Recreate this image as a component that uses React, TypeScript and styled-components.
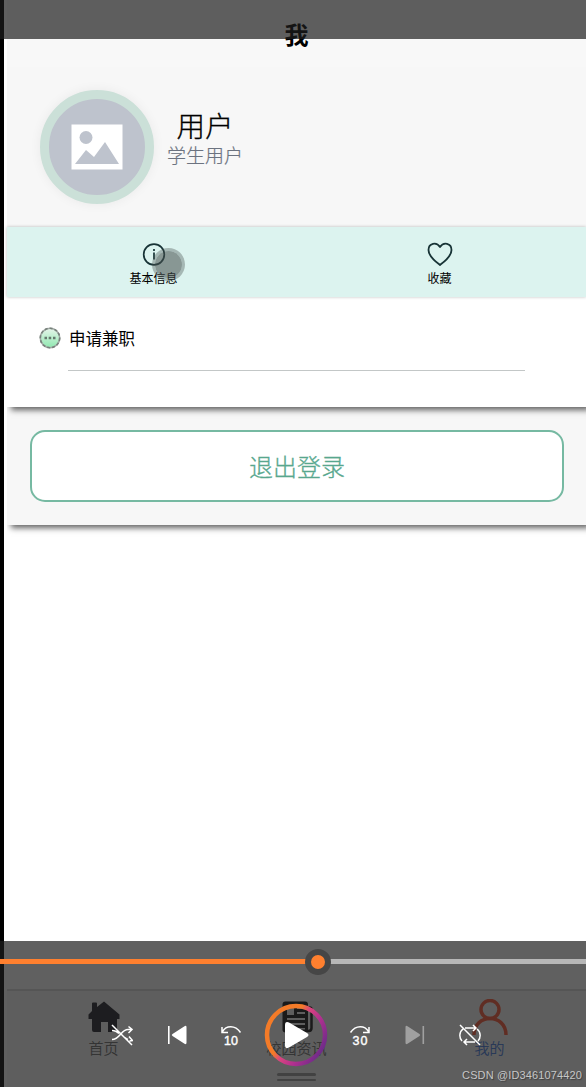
import React from "react";
import styled, { createGlobalStyle } from "styled-components";

const GlobalStyle = createGlobalStyle`
  * { box-sizing: border-box; }
  html, body { margin: 0; padding: 0; background: #fff; }
  body { font-family: "Noto Sans CJK SC", sans-serif; font-weight: 300; overflow: hidden; }
`;

const Screen = styled.div`
  position: relative;
  width: 586px;
  height: 1087px;
  padding-left: 7px;
  background: linear-gradient(90deg, #000 4px, #fff 4px);
  overflow: hidden;
`;

const Page = styled.main`
  display: flex;
  flex-direction: column;
  height: 100%;
`;

const Header = styled.header`
  height: 67px;
  flex: none;
  background: #f8f8f8;
  color: #000;
  font-size: 24px;
  font-weight: 700;
  line-height: 68px;
  text-align: center;
`;

const Profile = styled.section`
  display: flex;
  flex: none;
  height: 160px;
  padding: 23px 0 0 32.5px;
  background: #f7f7f7;
`;

const Avatar = styled.div`
  display: flex;
  flex: none;
  align-items: center;
  justify-content: center;
  width: 114px;
  height: 114px;
  border: 9px solid #cbe0d8;
  border-radius: 50%;
  background: #bec3cd;
  box-shadow: 0 0 12px rgba(0, 0, 0, 0.06);
`;

const Identity = styled.div`
  display: flex;
  flex-direction: column;
  align-items: center;
  width: 76px;
  margin: 17px 0 0 13.5px;
`;

const UserName = styled.div`
  color: #000;
  font-size: 28.5px;
  line-height: 35px;
  -webkit-text-stroke: 0.3px;
`;

const UserRole = styled.div`
  color: #6c7380;
  font-size: 19px;
  line-height: 26px;
  white-space: nowrap;
  -webkit-text-stroke: 0.2px;
`;

const Shortcuts = styled.nav`
  display: flex;
  position: relative;
  z-index: 2;
  flex: none;
  height: 70px;
  background: #dcf3ef;
  box-shadow: 0 0 3px rgba(0, 0, 0, 0.25);
`;

const Shortcut = styled.div<{ $width: number }>`
  display: flex;
  flex-direction: column;
  align-items: center;
  width: ${(p) => p.$width}px;
  padding-top: 14px;
  color: #000;
  font-size: 12px;
  font-weight: 400;
  line-height: 18px;
  svg { margin-bottom: 2px; }
`;

const Touch = styled.span`
  position: absolute;
  left: 145px;
  top: 21px;
  width: 33px;
  height: 33px;
  border: 3px solid rgba(70, 78, 76, 0.36);
  border-radius: 50%;
  background: rgba(70, 78, 76, 0.56);
  background-clip: padding-box;
`;

const Menu = styled.section`
  position: relative;
  z-index: 1;
  flex: none;
  height: 110px;
  padding: 27px 61px 0 32px;
  background: #fff;
  box-shadow: 4px 3px 6px rgba(0, 0, 0, 0.62);
  clip-path: inset(0 0 -14px 0);
`;

const MenuRow = styled.div`
  display: flex;
  align-items: center;
  gap: 8px;
  height: 27px;
  color: #000;
  font-size: 16.5px;
  font-weight: 400;
`;

const Divider = styled.div`
  height: 1px;
  margin: 19px 0 0 29px;
  background: #c3c7c7;
`;

const LogoutPanel = styled.section`
  flex: none;
  height: 118px;
  padding: 23px 23px 0;
  background: #f7f7f7;
  box-shadow: 4px 3px 6px rgba(0, 0, 0, 0.62);
  clip-path: inset(0 0 -14px 0);
`;

const LogoutButton = styled.button`
  display: block;
  width: 534px;
  height: 72px;
  padding: 0 0 2px;
  border: 2px solid #76b9a2;
  border-radius: 15px;
  background: #fff;
  color: #58a78e;
  font: 300 24px "Noto Sans CJK SC", sans-serif;
  -webkit-text-stroke: 0.3px;
`;

const TabBar = styled.footer`
  display: flex;
  flex: none;
  height: 98px;
  margin-top: auto;
  border-top: 2px solid #dadada;
  background: #f8f8f8;
`;

const Tab = styled.div<{ $color: string }>`
  display: flex;
  flex: 0 0 193px;
  flex-direction: column;
  align-items: center;
  padding-top: 8px;
  color: ${(p) => p.$color};
  font-size: 15px;
  line-height: 22px;
  -webkit-text-stroke: 0.2px;
  svg { margin-bottom: 2px; }
`;

const TopShade = styled.div`
  position: absolute;
  z-index: 3;
  inset: 0 0 auto;
  height: 39px;
  background: rgba(28, 28, 28, 0.7);
`;

const Player = styled.div`
  position: absolute;
  z-index: 3;
  inset: auto 0 0;
  height: 146px;
  padding-top: 18px;
  background: rgba(29, 29, 29, 0.7);
`;

const Track = styled.div`
  position: relative;
  height: 5px;
  background: linear-gradient(90deg, #ff802f 318px, #b7b7b7 318px);
`;

const Knob = styled.span`
  position: absolute;
  left: 304.5px;
  top: -10.5px;
  width: 26px;
  height: 26px;
  border: 6.5px solid #464646;
  border-radius: 50%;
  background: #ff802f;
`;

const Controls = styled.div`
  display: flex;
  align-items: center;
  gap: 27.6px;
  height: 64px;
  margin-top: 39px;
  padding-left: 108px;
`;

const Control = styled.div<{ $width: number }>`
  display: flex;
  flex: none;
  justify-content: center;
  width: ${(p) => p.$width}px;
`;

const Handle = styled.div`
  display: flex;
  flex-direction: column;
  gap: 3px;
  width: 39px;
  margin: 6px 0 0 277px;
  &::before, &::after {
    content: "";
    height: 2.5px;
    border-radius: 2px;
    background: #424242;
  }
`;

const Watermark = styled.div`
  position: absolute;
  right: 4px;
  bottom: 5px;
  color: #c6c6c6;
  font: 400 11px/14px "Liberation Sans", sans-serif;
  letter-spacing: 0.13px;
  text-shadow: 1px 1px 1px rgba(40, 40, 40, 0.6);
  white-space: nowrap;
`;

const Skip = ({ seconds, forward = false }: { seconds: number; forward?: boolean }) => (
  <svg width="22" height="22" viewBox="0 0 22 22" fill="none" stroke="#fff" strokeWidth="1.5">
    <g transform={forward ? "translate(22 0) scale(-1 1)" : undefined}>
      <path d="M2.500 7.500C6 1.500 15 .5 20.500 8.500M2 3v5.500h6" />
    </g>
    <text x="11" y="20.500" textAnchor="middle" fill="#fff" stroke="#fff" strokeWidth=".4" fontFamily="Liberation Sans, sans-serif" fontSize="12.500" textLength={forward ? 15 : 14}>{seconds}</text>
  </svg>
);

export default function App() {
  return (
    <>
      <GlobalStyle />
      <Screen>
        <Page>
          <Header>我</Header>
          <Profile>
            <Avatar>
              <svg width="52" height="46" viewBox="0 0 52 46">
                <rect width="51" height="45" x=".5" y=".5" fill="#fff" />
                <circle cx="15" cy="13.5" r="6.5" fill="#bec3cd" />
                <path d="M4 40 15 26l8 7L34 18l14 22Z" fill="#bec3cd" />
              </svg>
            </Avatar>
            <Identity>
              <UserName>用户</UserName>
              <UserRole>学生用户</UserRole>
            </Identity>
          </Profile>
          <Shortcuts>
            <Shortcut $width={293}>
              <svg width="26" height="26" viewBox="0 0 26 26" fill="none" stroke="#183336" strokeWidth="1.7">
                <circle cx="13" cy="13.5" r="10.3" />
                <path d="M13 8v2M13 11.500v7" />
              </svg>
              基本信息
            </Shortcut>
            <Shortcut $width={279}>
              <svg width="26" height="26" viewBox="0 0 26 26" fill="none" stroke="#183336" strokeWidth="1.8" strokeLinejoin="round">
                <path d="M13 24C9 21 1.500 15.500 1.500 9C1.500 2 9.500 .5 13 6C16.500 .5 24.500 2 24.500 9C24.500 15.500 17 21 13 24Z" />
              </svg>
              收藏
            </Shortcut>
            <Touch />
          </Shortcuts>
          <Menu>
            <MenuRow>
              <svg width="22" height="22" viewBox="0 0 22 22">
                <defs>
                  <linearGradient id="mint" x1="0" y1="0" x2="0" y2="1">
                    <stop stopColor="#e6f4ea" />
                    <stop offset="1" stopColor="#8fe8b0" />
                  </linearGradient>
                </defs>
                <circle cx="11" cy="11" r="9.7" fill="url(#mint)" stroke="#a3aaa6" strokeWidth="1.600" />
                <circle cx="11" cy="11" r="9.7" fill="none" stroke="#77807b" strokeWidth="1.600" strokeDasharray="3 2" />
                <path d="M5.500 11h2.500M9.700 11h2.500M14 11h2.500" stroke="#66786e" strokeWidth="2.500" />
              </svg>
              申请兼职
            </MenuRow>
            <Divider />
          </Menu>
          <LogoutPanel>
            <LogoutButton>退出登录</LogoutButton>
          </LogoutPanel>
          <TabBar>
            <Tab $color="#5c5c5c">
              <svg width="32" height="36" viewBox="0 0 32 36" fill="#202028">
                <path d="M16 2.500 31.500 15.500v4.500h-2.500v11q0 2-2 2h-7V23h-7v10H6q-2 0-2-2V20H.5v-4.500L4 12V4.500q0-1 1-1h3q1 0 1 1V8Z" />
              </svg>
              首页
            </Tab>
            <Tab $color="#5c5c5c">
              <svg width="34" height="36" viewBox="0 0 34 36">
                <path d="M25 8.500h4.500q2 0 2 2V29q0 3-3 3H8" fill="none" stroke="#141414" strokeWidth="2.500" />
                <rect x="2.500" y="2.500" width="25.500" height="31" rx="3" fill="#141414" />
                <path d="M7 9h7v7H7ZM17 8h8v2h-8ZM17 13h8v2h-8ZM7 19h18v2H7ZM7 24h18v2H7ZM7 29h18v1.500H7Z" fill="#f8f8f8" />
              </svg>
              校园资讯
            </Tab>
            <Tab $color="#2f6ee0">
              <svg width="36" height="36" viewBox="0 0 36 36" fill="none" stroke="#ff5533" strokeWidth="3.500">
                <circle cx="18" cy="10.500" r="9" />
                <path d="M2 36c0-22 32-22 32 0" />
              </svg>
              我的
            </Tab>
          </TabBar>
        </Page>
        <TopShade />
        <Player>
          <Track><Knob /></Track>
          <Controls>
            <Control $width={28}>
              <svg width="22" height="22" viewBox="0 0 22 22" fill="none" stroke="#fff" strokeWidth="1.500">
                <path d="M1 15.500C9 15.500 10 5.500 17 5.500h4M17.500 2.500 21 5.500l-3.500 3.500M1 6.500c3 0 5 1 7 3M14 13.500c1 1 2 1.500 3 2M18 12.500l3.500 4-3 .5M1 1l20 20" />
              </svg>
            </Control>
            <Control $width={26}>
              <svg width="20" height="20" viewBox="0 0 20 20" fill="#fff">
                <path d="M1 1h1.600v18H1ZM17.500 1.200q2-1 2 1v15.600q0 2-2 1L5.500 11q-1.500-1 0-2Z" />
              </svg>
            </Control>
            <Control $width={28}><Skip seconds={10} /></Control>
            <Control $width={46}>
              <svg width="64" height="64" viewBox="0 0 64 64" style={{ flex: "none" }}>
                <defs>
                  <linearGradient id="ring" x1="0" y1=".15" x2="1" y2=".75">
                    <stop offset=".38" stopColor="#f47b28" />
                    <stop offset=".5" stopColor="#d9447f" />
                    <stop offset=".7" stopColor="#b2308f" />
                    <stop offset="1" stopColor="#692b89" />
                  </linearGradient>
                </defs>
                <circle cx="32" cy="32" r="29" fill="none" stroke="url(#ring)" strokeWidth="4.500" />
                <path d="M21 22q0-4 4-2.500l18 10.500q3 2 0 4L25 44.500q-4 2-4-2Z" fill="#fff" />
              </svg>
            </Control>
            <Control $width={28}><Skip seconds={30} forward /></Control>
            <Control $width={26}>
              <svg width="20" height="20" viewBox="0 0 20 20" fill="#a0a0a0">
                <path d="M17.500 1h1.600v18h-1.600ZM2.500 1.200q-2-1-2 1v15.600q0 2 2 1L14.500 11q1.500-1 0-2Z" />
              </svg>
            </Control>
            <Control $width={28}>
              <svg width="22" height="22" viewBox="0 0 22 22" fill="none" stroke="#fff" strokeWidth="1.500">
                <path d="M6 4h11M14 1l3 3-3 3M16 18H5M8 15l-3 3 3 3M4 5C0 8 0 14 3 17M18 5c4 3 4 9 1 12M1 1l20 20" />
              </svg>
            </Control>
          </Controls>
          <Handle />
          <Watermark>CSDN @ID3461074420</Watermark>
        </Player>
      </Screen>
    </>
  );
}
